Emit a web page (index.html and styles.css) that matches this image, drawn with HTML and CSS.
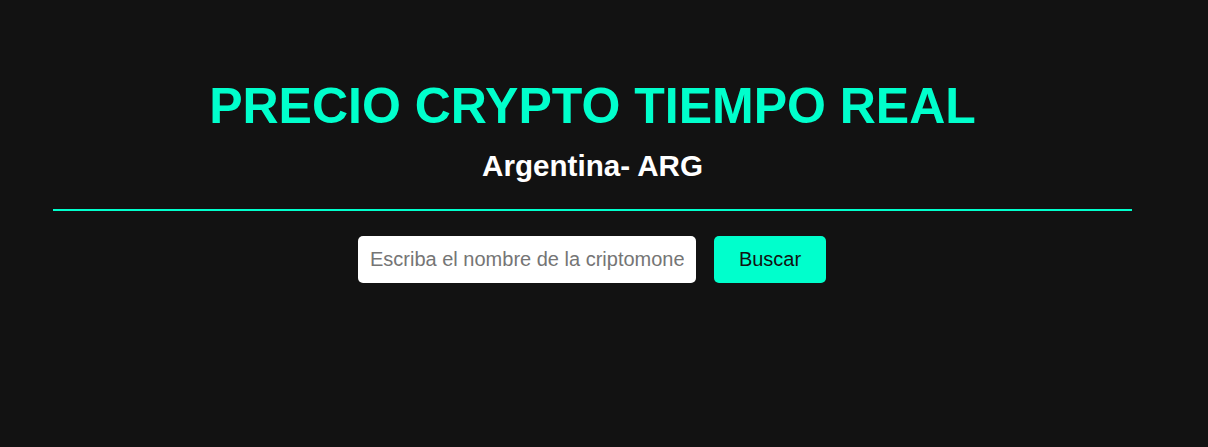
FILE: index.html
```html
<!DOCTYPE html>
<html lang="es">
<head>
<meta charset="utf-8">
<title>Precio Crypto Tiempo Real</title>
<link rel="stylesheet" href="styles.css">
</head>
<body>
  <main class="page">
    <header class="header">
      <h1 class="title">PRECIO CRYPTO TIEMPO REAL</h1>
      <h2 class="subtitle">Argentina- ARG</h2>
    </header>
    <hr class="divider">
    <form class="search">
      <input class="search-input" type="text" placeholder="Escriba el nombre de la criptomoneda">
      <button class="search-button" type="button">Buscar</button>
    </form>
  </main>
</body>
</html>
```

FILE: styles.css
```css
html, body {
  margin: 0;
  padding: 0;
  background: #121212;
}

body {
  font-family: "Liberation Sans", Arial, sans-serif;
  min-height: 447px;
}

.page {
  width: 1079px;
  margin-left: 53px;
  padding-top: 78px;
  display: flex;
  flex-direction: column;
  align-items: center;
}

.header {
  display: flex;
  flex-direction: column;
  align-items: center;
  gap: 14px;
}

.title {
  margin: 0;
  font-size: 50px;
  line-height: 57px;
  font-weight: 700;
  color: #00ffcc;
}

.subtitle {
  margin: 0;
  font-size: 29.6px;
  line-height: 34px;
  font-weight: 700;
  color: #ffffff;
}

.divider {
  align-self: stretch;
  margin: 26px 0 0 0;
  border: 0;
  height: 2px;
  background: #00ffcc;
}

.search {
  margin-top: 25px;
  display: flex;
  gap: 18px;
  margin-right: 1px;
}

.search-input {
  box-sizing: border-box;
  width: 338px;
  height: 47px;
  padding: 0 12px;
  border: 0;
  border-radius: 5px;
  background: #ffffff;
  font-family: "Liberation Sans", Arial, sans-serif;
  font-size: 20px;
  color: #222;
  outline: none;
}

.search-input::placeholder {
  color: #757575;
}

.search-button {
  box-sizing: border-box;
  width: 112px;
  height: 47px;
  border: 0;
  border-radius: 5px;
  background: #00ffcc;
  font-family: "Liberation Sans", Arial, sans-serif;
  font-size: 20px;
  color: #111111;
  cursor: pointer;
}
```
